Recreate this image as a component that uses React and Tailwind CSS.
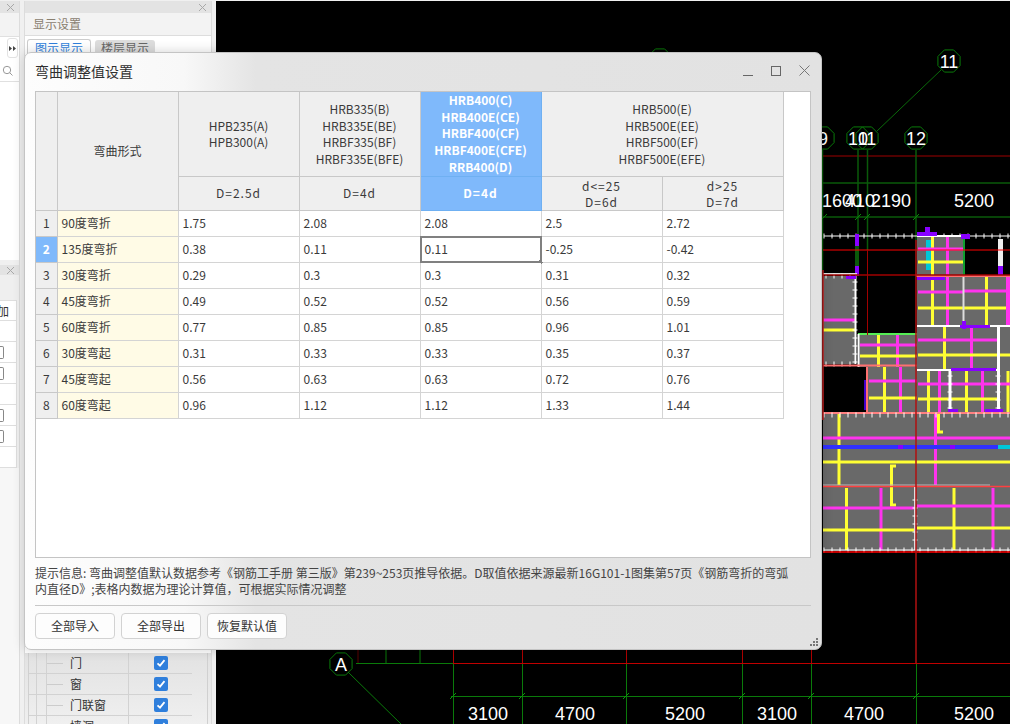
import React from "react";

const font = { fontFamily: '"Noto Sans CJK SC","Noto Sans",sans-serif' };

const rows = [
  ["90度弯折", "1.75", "2.08", "2.08", "2.5", "2.72"],
  ["135度弯折", "0.38", "0.11", "0.11", "-0.25", "-0.42"],
  ["30度弯折", "0.29", "0.3", "0.3", "0.31", "0.32"],
  ["45度弯折", "0.49", "0.52", "0.52", "0.56", "0.59"],
  ["60度弯折", "0.77", "0.85", "0.85", "0.96", "1.01"],
  ["30度弯起", "0.31", "0.33", "0.33", "0.35", "0.37"],
  ["45度弯起", "0.56", "0.63", "0.63", "0.72", "0.76"],
  ["60度弯起", "0.96", "1.12", "1.12", "1.33", "1.44"],
];

function Hex({ cx, cy, t, r = 12 }) {
  const pts = [];
  for (let i = 0; i < 8; i++) {
    const a = (Math.PI / 4) * i + Math.PI / 8;
    pts.push(`${cx + r * Math.cos(a)},${cy + r * Math.sin(a)}`);
  }
  return (
    <g>
      <polygon points={pts.join(" ")} fill="none" stroke="#0a7a0a" strokeWidth="1" />
      {t ? (
        <text x={cx} y={cy + 6.5} textAnchor="middle" fill="#fff" fontSize="18" fontFamily="Liberation Sans">
          {t}
        </text>
      ) : null}
    </g>
  );
}

function Dim({ x, y, t }) {
  return (
    <text x={x} y={y} textAnchor="middle" fill="#fff" fontSize="18" fontFamily="Liberation Sans">
      {t}
    </text>
  );
}

function Ticks({ x1, x2, y, step = 8, line = true }) {
  const a = [];
  for (let x = x1; x <= x2; x += step) a.push(x);
  return (
    <g>
      {line ? <line x1={x1} x2={x2} y1={y} y2={y} stroke="#fff" /> : null}
      {a.map((x) => (
        <line key={x} x1={x} x2={x} y1={y - 2.5} y2={y + 2.5} stroke="#fff" />
      ))}
    </g>
  );
}

function VTicks({ x, y1, y2, step = 8 }) {
  const a = [];
  for (let y = y1; y <= y2; y += step) a.push(y);
  return (
    <g>
      {a.map((y) => (
        <line key={y} x1={x - 2.5} x2={x + 2.5} y1={y} y2={y} stroke="#fff" />
      ))}
    </g>
  );
}

function H({ x1, x2, y, c, w = 3 }) {
  return <line x1={x1} x2={x2} y1={y} y2={y} stroke={c} strokeWidth={w} />;
}
function V({ y1, y2, x, c, w = 3 }) {
  return <line x1={x} x2={x} y1={y1} y2={y2} stroke={c} strokeWidth={w} />;
}
const Y = "#ffff33";
const M = "#ff33ee";
const P = "#8800ff";
const GR = "#696969";

function Cad() {
  return (
    <svg className="block" viewBox="216 0 794 724" width="794" height="724">
      <rect x="216" y="1" width="794" height="723" fill="#000" />
      <Hex cx={660} cy={60} />
      <Hex cx={949} cy={61} t="11" />
      <Hex cx={823} cy={138} t="9" />
      <Hex cx={858} cy={138} t="10" />
      <Hex cx={867} cy={138} t="11" />
      <Hex cx={916} cy={138} t="12" />
      <line x1={941} y1={70} x2={877} y2={131} stroke="#0a6a0a" />
      <H x1={822} x2={1010} y={156} c="#6a0000" w={1.5} />
      <H x1={822} x2={1010} y={183} c="#0a5a0a" w={1.5} />
      <H x1={822} x2={1010} y={217} c="#0a5a0a" w={1.5} />
      <V x={858} y1={150} y2={270} c="#0a5a0a" w={1.5} />
      <V x={867.5} y1={150} y2={250} c="#0a5a0a" w={1.5} />
      <V x={916} y1={150} y2={240} c="#0a5a0a" w={1.5} />
      <V x={822.5} y1={150} y2={270} c="#0a5a0a" w={1.5} />
      {[858, 867, 916, 824].map((x) => (
        <line key={x} x1={x - 3} y1={220} x2={x + 3} y2={214} stroke="#0a8a0a" />
      ))}
      <Dim x={842} y={207} t="1600" />
      <Dim x={860} y={207} t="410" />
      <Dim x={891} y={207} t="2190" />
      <Dim x={974} y={207} t="5200" />

      <Ticks x1={824} x2={1010} y={236} />
      <rect x="998" y="239" width="5" height="30" fill="#eee" />
      <rect x="998" y="266" width="5" height="10" fill={P} />
      <rect x="855" y="234" width="4" height="12" fill={P} />
      <rect x="855" y="246" width="4" height="20" fill="#0a5a0a" />
      <rect x="855" y="266" width="4" height="10" fill={P} />

      {/* grey slabs */}
      <rect x="823" y="276" width="33" height="88" fill={GR} />
      <rect x="917" y="236" width="47" height="40" fill={GR} />
      <rect x="917" y="276" width="93" height="50" fill={GR} />
      <rect x="917" y="326" width="93" height="44" fill={GR} />
      <rect x="859" y="334" width="58" height="33" fill={GR} />
      <rect x="868" y="367" width="49" height="46" fill={GR} />
      <rect x="917" y="370" width="93" height="43" fill={GR} />
      <rect x="823" y="413" width="187" height="73" fill={GR} />
      <rect x="823" y="486" width="187" height="65" fill={GR} />

      {/* slab B */}
      <rect x="926" y="240" width="5" height="30" fill="#00c8d8" />
      <V x={932.5} y1={236} y2={326} c={Y} />
      <V x={947.5} y1={236} y2={326} c={M} />
      <H x1={918} x2={963} y={249} c={M} />
      <H x1={918} x2={963} y={262} c={Y} />
      <H x1={917} x2={965} y={236} c="#fff" w={2} />
      <V x={964} y1={236} y2={275} c="#0fa030" w={2} />
      <rect x="917" y="232" width="20" height="4" fill={P} />
      <rect x="925" y="227" width="5" height="8" fill={P} />
      <rect x="961" y="234" width="9" height="5" fill={P} />

      {/* slab C */}
      <H x1={918} x2={963} y={292} c={M} />
      <H x1={918} x2={1010} y={308} c={Y} />
      <V x={986.5} y1={277} y2={326} c={Y} />
      <H x1={963} x2={1010} y={291} c={M} />
      <V x={1008} y1={277} y2={326} c={M} w={4} />
      <V x={963.5} y1={276} y2={326} c="#ddd" w={2} />
      <rect x="916" y="275" width="94" height="2" fill="#ff7070" />
      <rect x="917" y="277" width="28" height="3" fill={P} />
      <rect x="962" y="321" width="4" height="8" fill={P} />

      {/* slab D */}
      <V x={944.5} y1={327} y2={370} c={Y} />
      <V x={971.5} y1={327} y2={370} c={M} />
      <H x1={918} x2={998} y={340} c={M} />
      <H x1={918} x2={1010} y={355} c={Y} />
      <V x={998.5} y1={326} y2={370} c="#fff" w={3} />
      <H x1={917} x2={1010} y={326} c="#fff" w={2} />
      <rect x="960" y="325" width="30" height="3" fill={P} />

      {/* slab E */}
      <V x={878.5} y1={335} y2={367} c={Y} />
      <V x={897.5} y1={335} y2={367} c={M} />
      <H x1={860} x2={917} y={345} c={M} />
      <H x1={860} x2={917} y={356} c={Y} />
      <H x1={858} x2={917} y={334} c="#55ee55" w={2} />
      <V x={858.5} y1={334} y2={367} c="#fff" w={2} />

      {/* slab A */}
      <H x1={823} x2={855} y={320} c={M} />
      <H x1={823} x2={855} y={330} c={Y} />
      <H x1={823} x2={857} y={274} c="#ddd" w={2} />
      <V x={855.5} y1={276} y2={364} c="#fff" w={2} />
      <VTicks x={855} y1={282} y2={362} />
      <Ticks x1={826} x2={855} y={276} line={false} />
      <Ticks x1={826} x2={855} y={364} line={false} />
      <rect x="846" y="276" width="10" height="3" fill={P} />
      <H x1={823} x2={917} y={365.5} c="#ff7070" w={2} />

      {/* slab F */}
      <V x={884.5} y1={367} y2={412} c={Y} />
      <V x={900.5} y1={367} y2={412} c={M} />
      <H x1={869} x2={917} y={381} c={M} />
      <H x1={869} x2={917} y={398} c={Y} />
      <V x={867} y1={367} y2={413} c="#ff7070" w={2} />
      <V x={865} y1={380} y2={410} c="#4400cc" w={2} />

      {/* slab G */}
      <V x={928.5} y1={371} y2={412} c={Y} />
      <V x={939.5} y1={371} y2={412} c={M} />
      <V x={966.5} y1={371} y2={412} c={Y} />
      <V x={982.5} y1={371} y2={412} c={M} />
      <V x={1008} y1={371} y2={412} c={Y} />
      <H x1={918} x2={1010} y={384} c={M} />
      <H x1={918} x2={998} y={399} c={Y} />
      <H x1={917} x2={1000} y={370} c="#fff" w={2} />
      <V x={950} y1={370} y2={412} c="#fff" w={3} />
      <V x={998.5} y1={360} y2={412} c="#fff" w={3} />
      <VTicks x={950} y1={376} y2={408} />
      <VTicks x={998} y1={376} y2={408} />
      <rect x="951" y="368" width="45" height="3" fill={P} />
      <rect x="948" y="409" width="10" height="3" fill={P} />
      <rect x="985" y="409" width="18" height="3" fill={P} />

      {/* slab H */}
      <V x={839} y1={414} y2={485} c={Y} />
      <V x={935.5} y1={414} y2={485} c={M} />
      <H x1={823} x2={1010} y={438} c={M} />
      <rect x="823" y="445" width="187" height="4" fill="#3030ff" />
      <rect x="898" y="445" width="5" height="4" fill={P} />
      <rect x="950" y="445" width="5" height="4" fill={P} />
      <rect x="998" y="445" width="12" height="4" fill="#00c8d8" />
      <H x1={823} x2={1010} y={462} c={Y} />
      <path d="M938.5 414V432H943" fill="none" stroke={Y} strokeWidth="3" />
      <path d="M896 466H891.5V505H896" fill="none" stroke={Y} strokeWidth="3" />
      <H x1={823} x2={1010} y={413} c="#ff8080" w={2} />
      <Ticks x1={824} x2={1010} y={415} line={false} />
      <H x1={823} x2={990} y={485} c="#bbb" w={1} />
      <H x1={823} x2={1010} y={486.5} c="#ff4040" w={1.5} />

      {/* slab I */}
      <V x={846.5} y1={488} y2={550} c={Y} />
      <V x={881} y1={488} y2={550} c={M} />
      <V x={954} y1={488} y2={550} c={Y} />
      <V x={993} y1={488} y2={550} c={M} />
      <H x1={823} x2={915} y={508} c={M} />
      <H x1={917} x2={1010} y={506} c={M} />
      <H x1={823} x2={915} y={530} c={Y} />
      <H x1={917} x2={1010} y={528} c={Y} />
      <V x={915} y1={487} y2={550} c="#ddd" w={2} />
      <VTicks x={915} y1={500} y2={545} />
      <Ticks x1={824} x2={1010} y={550} />
      <H x1={823} x2={1010} y={552} c="#ff0000" w={1.5} />

      {/* red axes */}
      <H x1={823} x2={1010} y={250} c="#ff0000" w={1} />
      <H x1={823} x2={1010} y={275} c="#a00000" w={1.5} />
      <V x={823} y1={270} y2={420} c="#c02020" w={1.5} />
      <V x={867.5} y1={250} y2={335} c="#a00000" w={1} />
      <V x={916} y1={240} y2={663} c="#b01010" w={1.5} />

      {/* lower axes */}
      <H x1={356} x2={453} y={663.5} c="#0a7a0a" w={1} />
      <H x1={453} x2={1010} y={663.5} c="#c00000" w={1} />
      <V x={358} y1={650} y2={663} c="#5a0000" w={1} />
      {[453, 522, 626, 742, 811].map((x) => (
        <V key={x} x={x + 0.5} y1={650} y2={663} c="#b00000" w={1} />
      ))}
      {[453, 522, 626, 742, 811, 916].map((x) => (
        <V key={x} x={x + 0.5} y1={664} y2={724} c="#0a7a0a" w={1} />
      ))}
      {[386, 420].map((x) => (
        <V key={x} x={x} y1={650} y2={663} c="#0a7a0a" w={1} />
      ))}
      <H x1={451} x2={1010} y={696.5} c="#0a7a0a" w={1} />
      {[453, 522, 626, 742, 811, 916].map((x) => (
        <line key={x} x1={x - 3} y1={699} x2={x + 3} y2={693} stroke="#0a9a0a" />
      ))}
      <Hex cx={341} cy={664} t="A" />
      <line x1={348} y1={672} x2={401} y2={724} stroke="#0a7a0a" />
      <Dim x={488} y={720} t="3100" />
      <Dim x={575} y={720} t="4700" />
      <Dim x={685} y={720} t="5200" />
      <Dim x={777} y={720} t="3100" />
      <Dim x={864} y={720} t="4700" />
      <Dim x={974} y={720} t="5200" />
    </svg>
  );
}

function Close({ className = "" }) {
  return (
    <svg className={className} width="9" height="9" viewBox="0 0 9 9" fill="none" stroke="#a8a8a8">
      <path d="M1 1L8 8M8 1L1 8" />
    </svg>
  );
}

function Check() {
  return (
    <span className="flex h-[14px] w-[14px] items-center justify-center rounded-[2px] bg-[#2f7fdc]">
      <svg width="10" height="10" viewBox="0 0 10 10" fill="none" stroke="#fff" strokeWidth="1.8">
        <path d="M1.5 5.3L4 7.6L8.5 2.2" />
      </svg>
    </span>
  );
}

function Stub() {
  return (
    <div className="mr-[2px] flex h-[21px] shrink-0 items-center border-r border-b border-[#dedede] bg-white">
      <span className="h-[13px] w-[4px] rounded-r-[2px] border border-l-0 border-[#888]" />
    </div>
  );
}

function Empty() {
  return <div className="mr-[2px] h-[21px] shrink-0 border-r border-b border-[#dedede] bg-white" />;
}

function LeftPanels() {
  return (
    <div className="flex h-full w-[216px] shrink-0 gap-[4px] bg-[#f0f0f0] pt-px">
      <div className="flex w-[20px] shrink-0 flex-col border-r border-[#dcdcdc]">
        <div className="flex h-[12px] shrink-0 items-center justify-end bg-[#e3e3e3] pr-[4px]">
          <Close />
        </div>
        <div className="h-[24px] shrink-0 border-b border-[#e0e0e0] bg-[#f3f3f3]" />
        <div className="flex h-[22px] shrink-0 items-center bg-white pl-[7px]">
          <span className="flex h-[20px] w-[11px] items-center justify-center rounded-[3px] border border-[#e2e2e2]">
            <svg width="7" height="5" viewBox="0 0 7 5" fill="#444">
              <path d="M0 0L3 2.5L0 5ZM4 0L7 2.5L4 5Z" />
            </svg>
          </span>
        </div>
        <div className="flex h-[23px] shrink-0 items-center border-b border-[#e0e0e0] bg-white pl-[2px]">
          <svg width="11" height="11" viewBox="0 0 11 11" fill="none" stroke="#999">
            <circle cx="5" cy="5" r="3.7" />
            <path d="M7.7 7.7L10.5 10.5" />
          </svg>
        </div>
        <div className="h-[178px] shrink-0 bg-white" />
        <div className="h-[5px] shrink-0 bg-[#f0f0f0]" />
        <div className="flex h-[10px] shrink-0 items-center justify-end bg-[#e3e3e3] pr-[4px]">
          <Close />
        </div>
        <div className="h-[25px] shrink-0 bg-[#efefef]" />
        <div className="mr-[2px] flex h-[21px] shrink-0 items-center overflow-hidden border-y border-r border-[#dedede] bg-white text-[12px] text-[#333]">
          <span className="-ml-[3px] leading-none">加</span>
        </div>
        <Empty />
        <Stub />
        <Stub />
        <Empty />
        <Stub />
        <Stub />
        <Empty />
        <div className="flex-1 bg-[#f7f7f7]" />
      </div>
      <div className="flex w-[188px] shrink-0 flex-col border-x border-[#dcdcdc]">
        <div className="flex h-[12px] shrink-0 items-center justify-end bg-[#e3e3e3] pr-[4px]">
          <Close />
        </div>
        <div className="flex h-[22px] shrink-0 items-center bg-[#f3f3f3] pl-[8px] text-[12px] leading-none text-[#8a8070]">显示设置</div>
        <div className="flex h-[20px] shrink-0 items-start gap-[4px] border-t border-[#ddd] bg-white pl-[2px] pt-[3px] text-[12px] leading-[16px]">
          <span className="rounded-t-[3px] border border-b-0 border-[#ccc] px-[7px] text-[#2f7fdc]">图示显示</span>
          <span className="mt-[1px] rounded-t-[3px] bg-[#dddddd] px-[6px] text-[#666]">楼层显示</span>
        </div>
        <div className="h-[598px] shrink-0 bg-white" />
        <div className="flex flex-1 flex-col bg-[linear-gradient(180deg,#e2e2e2,#f2f2f2)] px-[3px]">
          <div className="border-x border-[#d0d0d0] pr-[15px]">
            {["门", "窗", "门联窗", "墙洞"].map((t) => (
              <div key={t} className="flex h-[21px] shrink-0 items-center border-b border-[#d2d2d2] text-[12px] text-[#333]">
                <span className="h-full w-[8px] shrink-0 border-r border-[#d2d2d2]" />
                <span className="h-full w-[10px] shrink-0 border-r border-[#d2d2d2]" />
                <span className="flex h-full w-[82px] shrink-0 items-center gap-[7px] border-r border-[#d2d2d2]">
                  <span className="h-px w-[16px] bg-[#ccc]" />
                  <span className="leading-none">{t}</span>
                </span>
                <span className="flex flex-1 justify-center">
                  <Check />
                </span>
              </div>
            ))}
          </div>
        </div>
      </div>
    </div>
  );
}

const thBase = "border p-0 text-center text-[12px] leading-[16.6px] ";
const grey = thBase + "border-[#c8c8c8] bg-[#efefef] pt-px font-normal text-[#3a3a3a] ";
const blue = thBase + "border-[#6fb0f2] bg-[#7fb9fb] font-bold text-white ";

function Table() {
  return (
    <table className="w-[747px] table-fixed border-collapse">
      <colgroup>
        <col className="w-[21px]" />
        <col className="w-[121px]" />
        <col className="w-[121px]" />
        <col className="w-[121px]" />
        <col className="w-[121px]" />
        <col className="w-[121px]" />
        <col className="w-[121px]" />
      </colgroup>
      <thead>
        <tr className="h-[84px]">
          <th rowSpan={2} className={grey + "border-t-0 border-l-0"} />
          <th rowSpan={2} className={grey + "border-t-0"}>弯曲形式</th>
          <th className={grey + "border-t-0"}>
            HPB235(A)
            <br />
            HPB300(A)
          </th>
          <th className={grey + "border-t-0"}>
            HRB335(B)
            <br />
            HRB335E(BE)
            <br />
            HRBF335(BF)
            <br />
            HRBF335E(BFE)
          </th>
          <th className={blue + "border-t-0"}>
            HRB400(C)
            <br />
            HRB400E(CE)
            <br />
            HRBF400(CF)
            <br />
            HRBF400E(CFE)
            <br />
            RRB400(D)
          </th>
          <th colSpan={2} className={grey + "border-t-0"}>
            HRB500(E)
            <br />
            HRB500E(EE)
            <br />
            HRBF500(EF)
            <br />
            HRBF500E(EFE)
          </th>
        </tr>
        <tr className="h-[34px]">
          <th className={grey + "tracking-[1px]"}>D=2.5d</th>
          <th className={grey + "tracking-[1px]"}>D=4d</th>
          <th className={blue + "tracking-[1px]"}>D=4d</th>
          <th className={grey + "!leading-[16px] tracking-[1px]"}>
            d&lt;=25
            <br />
            D=6d
          </th>
          <th className={grey + "!leading-[16px] tracking-[1px]"}>
            d&gt;25
            <br />
            D=7d
          </th>
        </tr>
      </thead>
      <tbody>
        {rows.map((r, i) => (
          <tr key={i} className="h-[26px] text-[12px] text-[#3a3a3a]">
            <td
              className={
                "border border-l-0 border-[#c8c8c8] p-0 text-center text-[12px] " +
                (i === 1 ? "bg-[#7fb9fb] font-bold text-white" : "bg-[#efefef]")
              }
            >
              {i + 1}
            </td>
            <td className="border border-[#d4d4d4] bg-[#fffbe6] px-[4px] py-0">{r[0]}</td>
            {r.slice(1).map((v, j) => (
              <td key={j} className="relative border border-[#d4d4d4] bg-white px-[4px] py-0">
                {v}
                {i === 1 && j === 2 ? (
                  <span className="absolute -inset-px border-2 border-[#808080]">
                    <span className="absolute -bottom-[3px] -right-[3px] h-[4px] w-[4px] bg-[#808080]" />
                  </span>
                ) : null}
              </td>
            ))}
          </tr>
        ))}
      </tbody>
    </table>
  );
}

export default function App() {
  return (
    <div className="relative flex h-[724px] w-[1010px] overflow-hidden bg-[#f0f0f0]" style={font}>
      <LeftPanels />
      <div className="h-full flex-1">
        <Cad />
      </div>

      <div className="absolute left-[24px] top-[52px] flex h-[598px] w-[798px] flex-col rounded-[7px] border border-[#c4c4c4] bg-[linear-gradient(90deg,#fdfdfd_0%,#f8f8f8_20%,#e4e4e4_29%,#e2e2e2_100%)] px-[10px] shadow-[0_0_12px_rgba(0,0,0,0.18)]">
        <div className="flex h-[38px] shrink-0 items-center justify-between pb-[3px]">
          <span className="text-[14px] leading-none text-[#2f2f2f]">弯曲调整值设置</span>
          <div className="flex items-center gap-[18px] pr-px">
            <svg width="10" height="11" viewBox="0 0 10 11" fill="none" stroke="#666">
              <path d="M0 10.5H10" />
            </svg>
            <svg width="10" height="10" viewBox="0 0 10 10" fill="none" stroke="#666">
              <rect x="0.5" y="0.5" width="9" height="9" />
            </svg>
            <svg width="11" height="11" viewBox="0 0 11 11" fill="none" stroke="#777">
              <path d="M0.5 0.5L10.5 10.5M10.5 0.5L0.5 10.5" />
            </svg>
          </div>
        </div>
        <div className="h-[467px] shrink-0 border border-[#c4c4c4] bg-white">
          <Table />
        </div>
        <p className="mt-[7px] h-[32px] shrink-0 pr-[14px] text-[12px] leading-[16px] text-[#444]">
          提示信息: 弯曲调整值默认数据参考《钢筋工手册 第三版》第239~253页推导依据。D取值依据来源最新16G101-1图集第57页《钢筋弯折的弯弧内直径D》;表格内数据为理论计算值，可根据实际情况调整
        </p>
        <div className="mt-[8px] h-px shrink-0 bg-[#c8c8c8]" />
        <div className="mt-[7px] flex gap-[6px]">
          {["全部导入", "全部导出", "恢复默认值"].map((t) => (
            <button
              key={t}
              className="flex h-[26px] w-[80px] items-center justify-center rounded-[4px] border border-[#d2d2d2] bg-[#fdfdfd] text-[12px] leading-none text-[#333]"
            >
              {t}
            </button>
          ))}
        </div>
        <svg className="absolute bottom-[2px] right-[2px]" width="10" height="10" viewBox="0 0 10 10" fill="#777">
          <rect x="7" y="1" width="2" height="2" />
          <rect x="4" y="4" width="2" height="2" />
          <rect x="7" y="4" width="2" height="2" />
          <rect x="1" y="7" width="2" height="2" />
          <rect x="4" y="7" width="2" height="2" />
          <rect x="7" y="7" width="2" height="2" />
        </svg>
      </div>
    </div>
  );
}
